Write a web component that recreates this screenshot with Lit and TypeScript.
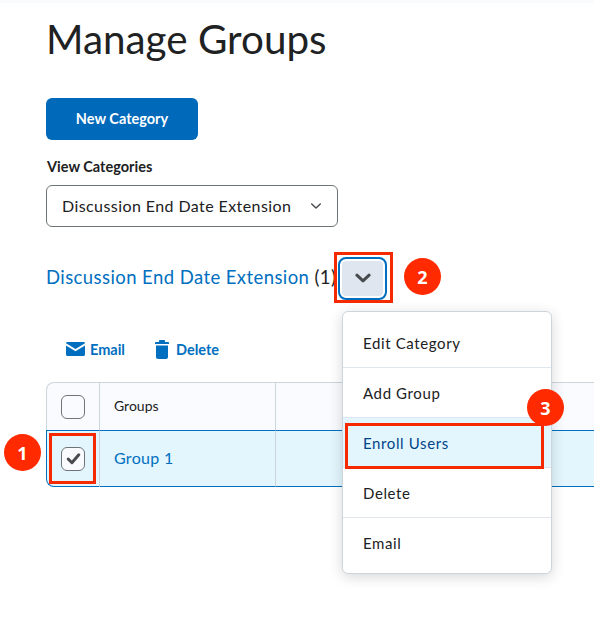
import { LitElement, html, css } from 'lit';
import { customElement } from 'lit/decorators.js';

const chevron = (size: number, width: number) => html`<svg width=${size} height=${size} viewBox="0 0 18 18" fill="none" stroke="currentColor" stroke-width=${width} stroke-linecap="round" stroke-linejoin="round"><path d="M3.5 6.500 9 11.500l5.500-5"/></svg>`;

@customElement('app-root')
export class AppRoot extends LitElement {
  static styles = css`
    :host {
      display: block;
      position: relative;
      width: 594px;
      height: 631px;
      overflow: hidden;
      background: #fff;
      font-family: Lato, "Liberation Sans", sans-serif;
      color: #202122;
    }
    .strip { height: 3px; background: #f9fafb; }
    .page { padding: 13px 0 0 46px; }
    h1 { margin: 0; font-size: 40.4px; line-height: 46px; font-weight: 400; height: 82px; }
    .primary {
      display: flex; align-items: center; justify-content: center;
      width: 152px; height: 42px; padding-bottom: 2px; box-sizing: border-box; border-radius: 6px;
      background: #0069ba; color: #fff; font-size: 14.5px; font-weight: 700;
    }
    .label { margin-top: 18px; padding-left: 1px; font-size: 14.5px; line-height: 18px; font-weight: 700; }
    .select {
      box-sizing: border-box; margin-top: 9px; width: 292px; height: 42px;
      display: flex; align-items: center; justify-content: space-between;
      padding: 0 14px 2px 15px; border: 1px solid #6e7477; border-radius: 6px;
      font-size: 16px; letter-spacing: 0.42px; color: #202122;
    }
    .select svg { color: #494c4e; margin-top: 2px; }
    .heading { display: flex; align-items: center; margin-top: 29px; height: 44px; font-size: 18.5px; letter-spacing: 0.42px; }
    .heading > a, .heading > span { position: relative; top: -1px; }
    .heading a { color: #006fbf; }
    .menu-btn {
      box-sizing: border-box; width: 49px; height: 43px; margin-left: 2px;
      display: flex; align-items: center; justify-content: center;
      background: #dfe6ef; color: #494c4e; border-radius: 8px;
      border: 2px solid #006fbf; box-shadow: inset 0 0 0 2px #fff;
    }
    .toolbar { display: flex; gap: 30px; margin: 37px 0 0 20px; height: 24px; color: #006fbf; font-size: 14.5px; font-weight: 700; }
    .tool { display: flex; align-items: center; gap: 7px; }
    .tool:first-child { gap: 5px; }
    table {
      margin-top: 21px; width: 620px; border-collapse: separate; border-spacing: 0;
      table-layout: fixed; font-size: 14px;
    }
    th, td { padding: 0; text-align: left; vertical-align: middle; font-weight: 400; }
    th {
      height: 47px; background: #f9fbff; border-top: 1px solid #cdd5dc;
      border-right: 1px solid #cdd5dc;
    }
    th:first-child { border-left: 1px solid #cdd5dc; border-top-left-radius: 8px; }
    td {
      height: 55px; background: #e3f6fe; border-top: 1px solid #006fbf;
      border-bottom: 1px solid #006fbf; border-right: 1px solid #cdd5dc;
    }
    td:first-child { border-left: 1px solid #006fbf; border-bottom-left-radius: 8px; }
    .check-col { width: 54px; }
    .name-col { width: 176px; }
    .cell-check { display: flex; justify-content: center; }
    .name { padding: 0 0 2px 14px; }
    .link { padding: 0 0 3px 14px; font-size: 16px; letter-spacing: 0.3px; color: #006fbf; }
    .box {
      box-sizing: border-box; width: 24px; height: 24px; border-radius: 6px;
      border: 1px solid #6e7477; background: #f9fbff;
      display: flex; align-items: center; justify-content: center; color: #494c4e;
    }
    .menu {
      position: absolute; left: 342px; top: 311px; width: 210px;
      box-sizing: border-box; background: #fff; border: 1px solid #cdd5dc; border-radius: 6px;
      box-shadow: 0 3px 14px rgba(0, 0, 0, 0.16); padding: 6px 0 5px;
    }
    .item {
      box-sizing: border-box; height: 50px; display: flex; align-items: center; padding-left: 20px;
      font-size: 15px; letter-spacing: 0.62px; border-bottom: 1px solid #dfe6ef;
    }
    .item:last-child { border-bottom: none; }
    .item.active { background: #e3f6fe; color: #004489; }
    .hl { position: absolute; box-sizing: border-box; border: 3px solid #f52a00; }
    .num {
      position: absolute; width: 37px; height: 37px; border-radius: 50%;
      display: flex; align-items: center; justify-content: center;
      background: #ff2a00; color: #fff; font-size: 18px; font-weight: 700;
      font-family: "Open Sans", "Liberation Sans", sans-serif;
    }
  `;

  render() {
    return html`
      <div class="strip"></div>
      <div class="page">
        <h1>Manage Groups</h1>
        <div class="primary">New Category</div>
        <div class="label">View Categories</div>
        <div class="select">
          <span>Discussion End Date Extension</span>
          ${chevron(14, 1.9)}
        </div>
        <div class="heading">
          <a>Discussion End Date Extension</a><span>&nbsp;(1)</span>
          <div class="menu-btn">${chevron(20, 2.8)}</div>
        </div>
        <div class="toolbar">
          <div class="tool">
            <svg width="19" height="14" viewBox="0 0 19 14" fill="#006fbf"><path d="M1.500 0h16c.8 0 1.500.5 1.500 1.200L9.500 7 0 1.200C0 .5.7 0 1.500 0z"/><path d="M0 3.400l9.500 5.800L19 3.400v9.100c0 .8-.7 1.500-1.500 1.500h-16C.7 14 0 13.300 0 12.500z"/></svg>
            Email
          </div>
          <div class="tool">
            <svg width="14" height="19" viewBox="0 0 14 19" fill="#006fbf"><path d="M5 0h4c.6 0 1 .4 1 1v1h3c.6 0 1 .4 1 1v1H0V3c0-.6.4-1 1-1h3V1c0-.6.4-1 1-1z"/><path d="M1 5.500h12V17c0 1.100-.9 2-2 2H3c-1.100 0-2-.9-2-2z"/></svg>
            Delete
          </div>
        </div>
        <table>
          <colgroup><col class="check-col" /><col class="name-col" /><col /></colgroup>
          <tr>
            <th><div class="cell-check"><div class="box"></div></div></th>
            <th><div class="name">Groups</div></th>
            <th></th>
          </tr>
          <tr>
            <td>
              <div class="cell-check">
                <div class="box">
                  <svg width="17" height="17" viewBox="0 0 16 16" fill="none" stroke="currentColor" stroke-width="2.8" stroke-linecap="round" stroke-linejoin="round"><path d="M3 8.500 6.500 12 13 4.500"/></svg>
                </div>
              </div>
            </td>
            <td><div class="link">Group 1</div></td>
            <td></td>
          </tr>
        </table>
      </div>

      <div class="menu">
        <div class="item">Edit Category</div>
        <div class="item">Add Group</div>
        <div class="item active">Enroll Users</div>
        <div class="item">Delete</div>
        <div class="item">Email</div>
      </div>

      <div class="hl" style="left:49px;top:433px;width:47px;height:51px"></div>
      <div class="hl" style="left:334px;top:252px;width:59px;height:51px"></div>
      <div class="hl" style="left:345px;top:423px;width:199px;height:46px"></div>
      <div class="num" style="left:4px;top:434px">1</div>
      <div class="num" style="left:404px;top:258px">2</div>
      <div class="num" style="left:527px;top:389px">3</div>
    `;
  }
}
